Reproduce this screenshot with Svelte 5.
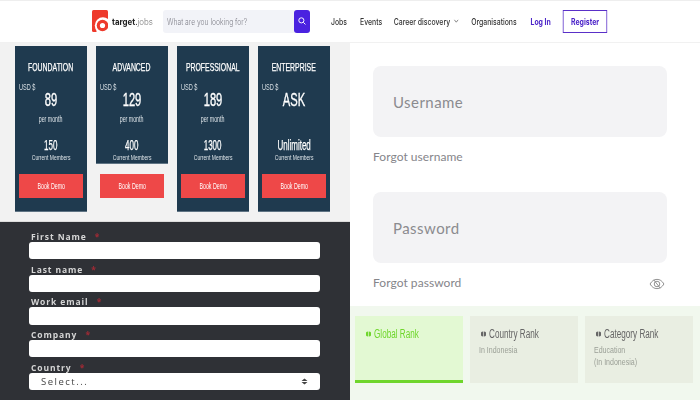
<script>
  const plans = [
    { name: 'FOUNDATION', price: '89', per: 'per month', members: '150' },
    { name: 'ADVANCED', price: '129', per: 'per month', members: '400', short: true },
    { name: 'PROFESSIONAL', price: '189', per: 'per month', members: '1300' },
    { name: 'ENTERPRISE', price: 'ASK', per: '', members: 'Unlimited' }
  ];
  const fields = ['First Name', 'Last name', 'Work email', 'Company'];
  const ranks = [
    { title: 'Global Rank', lines: [], active: true },
    { title: 'Country Rank', lines: ['In Indonesia'] },
    { title: 'Category Rank', lines: ['Education', '(In Indonesia)'] }
  ];
</script>

<div class="page">
  <header class="top">
    <div class="logo">
      <svg width="16" height="22" viewBox="0 0 16 22" aria-hidden="true">
        <rect width="16" height="22" rx="1.500" fill="#ee3a2c"/>
        <circle cx="11" cy="15.500" r="8.200" fill="#fff"/>
        <path d="M4.500 22V15.500A6.500 6.500 0 0 1 11 9H16V22Z" fill="#fff"/>
        <circle cx="10.500" cy="15.500" r="5.800" fill="#ee3a2c"/>
        <circle cx="10.500" cy="15.500" r="2.600" fill="#fff"/>
      </svg>
      <span class="brand"><b>target</b><i>.</i><span>jobs</span></span>
    </div>
    <div class="search">
      <span class="ph">What are you looking for?</span>
      <span class="sbtn">
        <svg width="8" height="8" viewBox="0 0 10 10" aria-hidden="true"><circle cx="4.200" cy="4.200" r="3.200" fill="none" stroke="#fff" stroke-width="1.200"/><path d="M6.700 6.700L9.300 9.300" stroke="#fff" stroke-width="1.200"/></svg>
      </span>
    </div>
    <nav class="nav">
      <span class="jobs">Jobs</span>
      <span class="events">Events</span>
      <span class="career">Career discovery
        <svg width="7.500" height="4" viewBox="0 0 6 4" aria-hidden="true"><path d="M.5.800L3 3.200 5.500.800" fill="none" stroke="#555" stroke-width=".8"/></svg>
      </span>
      <span class="orgs">Organisations</span>
      <span class="login">Log In</span>
      <span class="register">Register</span>
    </nav>
  </header>

  <main class="body">
    <section class="left">
      <div class="plans">
        {#each plans as p}
          <div class="plan">
            <div class="card" class:short={p.short}>
              <div class="pname"><span>{p.name}</span></div>
              <div class="usd"><span>USD $</span></div>
              <div class="price"><span>{p.price}</span></div>
              <div class="per"><span>{p.per}&nbsp;</span></div>
              <div class="members"><span>{p.members}</span></div>
              <div class="cur"><span>Current Members</span></div>
              {#if !p.short}
                <div class="demo"><span>Book Demo</span></div>
              {/if}
            </div>
            {#if p.short}
              <div class="demo outer"><span>Book Demo</span></div>
            {/if}
          </div>
        {/each}
      </div>
      <form class="form">
        {#each fields as f}
          <div class="lab">{f} <em>*</em></div>
          <div class="inp"></div>
        {/each}
        <div class="lab">Country <em>*</em></div>
        <div class="inp sel">
          <span>Select...</span>
          <svg width="7" height="7" viewBox="0 0 7 7" aria-hidden="true"><path d="M3.500.5L6.500 3H.5ZM3.500 6.500L.5 4H6.500Z" fill="#444"/></svg>
        </div>
      </form>
    </section>

    <section class="right">
      <div class="login-form">
        <div class="box">Username</div>
        <div class="hint">Forgot username</div>
        <div class="box second">Password</div>
        <div class="hint row">
          <span>Forgot password</span>
          <svg width="16" height="12" viewBox="0 0 17 13" aria-hidden="true">
            <path d="M1 6.500C3 3 5.500 1.500 8.500 1.500S14 3 16 6.500C14 10 11.500 11.500 8.500 11.500S3 10 1 6.500Z" fill="none" stroke="#8a8a8a" stroke-width="1"/>
            <circle cx="8.500" cy="6.500" r="3" fill="none" stroke="#8a8a8a" stroke-width="1"/>
            <path d="M5 2L12 11" stroke="#8a8a8a" stroke-width="1"/>
          </svg>
        </div>
      </div>
      <div class="ranks">
        {#each ranks as r}
          <div class="rank" class:active={r.active}>
            <div class="rtitle">
              <svg width="5" height="6" viewBox="0 0 6 7" aria-hidden="true"><path d="M2.600.5A3 3 0 0 0 2.600 6.500ZM3.400.5A3 3 0 0 1 3.400 6.500Z" fill="currentColor"/></svg>
              <span>{r.title}</span>
            </div>
            {#each r.lines as l}
              <div class="rline">{l}</div>
            {/each}
          </div>
        {/each}
      </div>
    </section>
  </main>
</div>

<style>
  :global(body) { margin: 0; background: #fff; }
  .page { width: 700px; height: 400px; overflow: hidden; display: flex; flex-direction: column; font-family: "Liberation Sans", sans-serif; }

  .top { height: 43px; box-sizing: border-box; display: flex; align-items: center; padding: 0 0 1px 92px; background: #fff; border-top: 1px solid #eee; border-bottom: 1px solid #f1f1f1; filter: blur(.35px); }
  .logo { display: flex; align-items: center; width: 71px; height: 22px; gap: 4px; }
  .logo svg { flex: none; }
  .brand { font: 400 9px Inter, sans-serif; color: #777; white-space: nowrap; transform: scaleX(.88); transform-origin: left center; }
  .brand b { font-weight: 700; color: #222; }
  .brand i { font-style: normal; color: #222; }
  .brand span { font-weight: 300; }
  .search { width: 147px; height: 23px; display: flex; align-items: center; justify-content: space-between; background: #f2f3f8; border-radius: 3px; }
  .ph { font: 300 9px Inter, sans-serif; color: #7f7f88; margin-left: 4px; white-space: nowrap; transform: scaleX(.75); transform-origin: left center; }
  .sbtn { width: 16px; height: 23px; display: flex; align-items: center; justify-content: center; background: #4a22e0; border-radius: 3px; }
  .nav { display: flex; align-items: center; font: 500 9px Inter, sans-serif; color: #333; white-space: nowrap; margin-left: 21px; transform: scaleX(.765); transform-origin: left center; }
  .events { margin-left: 17px; }
  .career { margin-left: 15px; display: flex; align-items: center; gap: 4px; }
  .orgs { margin-left: 16px; }
  .login { margin-left: 18px; color: #4a22c8; font-weight: 700; }
  .register { margin-left: 16px; width: 57.500px; height: 23px; box-sizing: border-box; display: flex; align-items: center; justify-content: center; border: 1.500px solid #5a30c8; color: #4a22c8; font-weight: 700; }

  .body { flex: 1; display: flex; min-height: 0; }
  .left { width: 350px; display: flex; flex-direction: column; }
  .plans { height: 179px; box-sizing: border-box; background: #f2f2f2; padding: 3px 0 0 15px; display: flex; gap: 9px; border-bottom: 1px solid #ddd; }
  .plan { width: 72px; display: flex; flex-direction: column; }
  .card { height: 166px; box-sizing: border-box; background: #1f3a4f; color: #fff; border-bottom: 1px solid #5f7484; padding-top: 14px; }
  .card.short { height: 118px; }
  .card > div { display: flex; justify-content: center; white-space: nowrap; }
  .card span { display: inline-block; flex: none; transform: scaleX(.62); }
  .pname { font-size: 11.500px; line-height: 14px; height: 14px; -webkit-text-stroke: .25px #fff; }
  .card > .usd { justify-content: flex-start; font-size: 9px; line-height: 10px; height: 10px; margin-top: 8px; padding-left: 4px; color: #d8dfe4; }
  .card .pname span { transform: scaleX(.6); }
  .card .usd span { transform-origin: left center; }
  .price { font-size: 18px; line-height: 22px; height: 22px; margin-top: -3px; -webkit-text-stroke: .35px #fff; }
  .per { font-size: 8.500px; line-height: 10px; height: 10px; margin-top: 3px; color: #dfe5e9; }
  .members { font-size: 14px; line-height: 16px; height: 16px; margin-top: 13px; -webkit-text-stroke: .25px #fff; }
  .card .members span { transform: scaleX(.57); }
  .cur { font-size: 8px; line-height: 9px; height: 9px; color: #dfe5e9; }
  .card > .demo, .demo { width: 64px; height: 24px; margin: 12px auto 0; background: #ee4848; color: #fff; font-size: 8.500px; display: flex; align-items: center; justify-content: center; box-sizing: border-box; }
  .demo span { display: inline-block; transform: scaleX(.62); white-space: nowrap; }
  .demo.outer { margin-top: 10px; }

  .form { flex: 1; background: #2f3136; padding: 10px 30px 0 29px; filter: blur(.3px); }
  .lab { font: 700 8.500px/10px "Open Sans", sans-serif; letter-spacing: .9px; color: #d6d6d6; padding-left: 2px; height: 10px; }
  .lab em { font-style: normal; color: #a02a35; margin-left: 5px; }
  .inp { height: 17.300px; background: #fff; border-radius: 3px; margin-bottom: 5.400px; }
  .sel { display: flex; align-items: center; justify-content: space-between; padding: 0 12px; font: 400 9.500px "Open Sans", sans-serif; letter-spacing: 1.500px; color: #444; }

  .right { flex: 1; display: flex; flex-direction: column; }
  .login-form { height: 263px; padding: 23px 33px 0 23px; box-sizing: border-box; }
  .box { height: 71px; background: #f3f3f5; border-radius: 8px; display: flex; align-items: center; padding-left: 20px; font: 400 15px Lato, sans-serif; color: #8b8b8f; letter-spacing: .45px; }
  .box.second { margin-top: 27px; }
  .hint { font: 400 12px/16px Lato, sans-serif; color: #85858a; margin-top: 12px; letter-spacing: .05px; }
  .hint.row { display: flex; justify-content: space-between; align-items: center; }
  .hint svg { margin: 2px 2px 0 0; }

  .ranks { flex: 1; background: #f1f8ee; display: flex; gap: 7px; padding: 10px 7px 0 5px; filter: blur(.35px); }
  .rank { width: 108px; height: 67px; box-sizing: border-box; background: #e9eee2; padding: 11px 0 0 9px; color: #666; }
  .rtitle { display: flex; align-items: center; gap: 3px; font-size: 12px; line-height: 14px; height: 14px; white-space: nowrap; margin-left: 2px; }
  .rtitle span { display: inline-block; transform: scaleX(.68); transform-origin: left center; }
  .rline { font-size: 9.500px; line-height: 12px; margin-top: 3px; color: #9a9f96; transform: scaleX(.74); transform-origin: left center; white-space: nowrap; }
  .rline + .rline { margin-top: 0; }
  .rank.active { background: #e3f9d3; border-bottom: 3px solid #6fd62c; color: #6fd62c; }
</style>
